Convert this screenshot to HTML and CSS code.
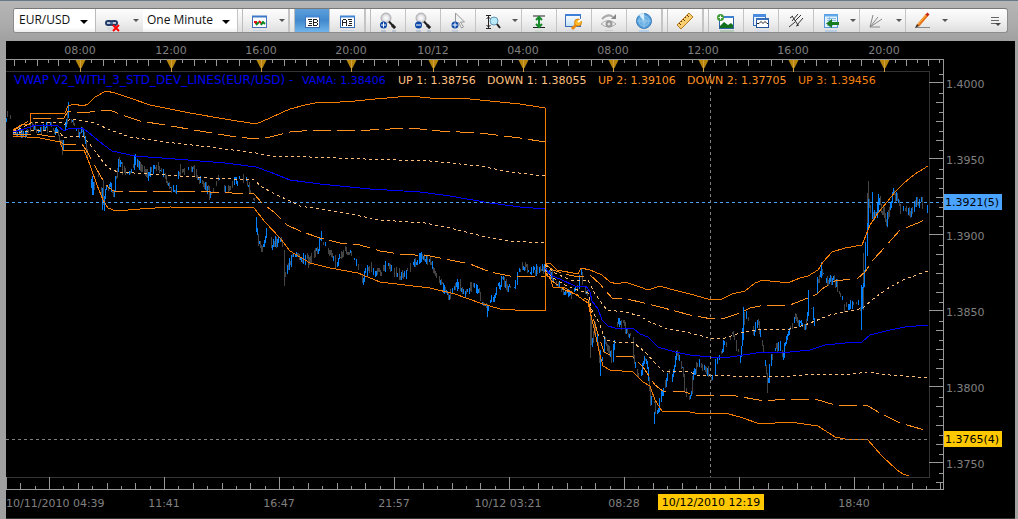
FILE: index.html
```html
<!DOCTYPE html>
<html lang="en">
<head>
<meta charset="utf-8">
<title>EUR/USD chart</title>
<link rel="stylesheet" href="styles.css">
</head>
<body>
<svg class="defs" aria-hidden="true">
  <defs>
    <radialGradient id="lens"><stop offset="0" stop-color="#fff"/><stop offset=".6" stop-color="#e4e4e8"/><stop offset="1" stop-color="#b8b8bc"/></radialGradient>
    <linearGradient id="win" x2="0" y2="1"><stop offset="0" stop-color="#fff"/><stop offset="1" stop-color="#bfe0f8"/></linearGradient>
    <radialGradient id="radar"><stop offset="0" stop-color="#8cc8f0"/><stop offset="1" stop-color="#4a96d4"/></radialGradient>
  </defs>
</svg>
<div class="window">
  <header class="frame-top">
    <div class="tab-strip"></div>
    <div class="toolbar" role="toolbar" aria-label="Chart tools">
      <label class="picker symbol"><select aria-label="Instrument"><option>EUR/USD</option></select></label>
      <button class="tool link" aria-label="Link charts">
        <svg class="icon" viewBox="0 0 24 24"><g fill="none" stroke="#1f3a66" stroke-width="2"><rect x="5" y="12" width="6" height="4" rx="2"/><rect x="10" y="12" width="6" height="4" rx="2"/></g><path d="M7 14h7" stroke="#7fa0cc"/><path d="M6 19h7M7 21h5" stroke="#c8ccd2"/><path d="M12 16l6 6M18 16l-6 6" stroke="#f00" stroke-width="2"/></svg>
        <span class="caret"></span></button>
      <label class="picker period"><select aria-label="Period"><option>One Minute</option></select></label>
      <span class="gap"></span>
      <button class="tool wide" aria-label="Chart type">
        <svg class="icon" viewBox="0 0 24 24"><rect x="5.500" y="7.500" width="14" height="11" fill="#fff" stroke="#4771b8"/><path d="M5 7.500h15" stroke="#3d78c8" stroke-width="2"/><path d="M7 13h2v2" fill="none" stroke="#e01010" stroke-width="2"/><path d="M9 16l3-3" fill="none" stroke="#0a8a20" stroke-width="2"/><path d="M12 12l3 3" fill="none" stroke="#e01010" stroke-width="2"/><path d="M14 16l2-3 2 2" fill="none" stroke="#0a8a20" stroke-width="2"/><path d="M6 21.500h13" stroke="#c9d6e8"/></svg>
        <span class="caret"></span></button>
      <span class="gap"></span>
      <button class="tool active" aria-label="Bid" aria-pressed="true">
        <svg class="icon" viewBox="0 0 24 24"><rect x="5.500" y="7.500" width="14" height="11" fill="#fff" stroke="#3a6eb0"/><path d="M5 7.500h15" stroke="#4286d6" stroke-width="2"/><path d="M8 10.500h4M9 12.500h3M9 14.500h3M8 16.500h4M13.500 10v7M13 10.500h4M13 13.500h4M13 16.500h4M17.500 11v2M17.500 14v2" stroke="#222"/></svg></button>
      <button class="tool" aria-label="Ask">
        <svg class="icon" viewBox="0 0 24 24"><rect x="5.500" y="7.500" width="14" height="11" fill="#fff" stroke="#3a6eb0"/><path d="M5 7.500h15" stroke="#4286d6" stroke-width="2"/><path d="M7.500 11v6M11.500 11v6M8 10.500h3M8 13.500h3M13 10.500h4M14 12.500h3M14 14.500h3M13 16.500h4" stroke="#222"/><path d="M6 21.500h13" stroke="#c9d6e8"/></svg></button>
      <span class="gap"></span>
      <button class="tool" aria-label="Zoom in">
        <svg class="icon" viewBox="0 0 24 24"><circle cx="10" cy="9" r="5" fill="url(#lens)" stroke="#b5b5b8"/><path d="M13 12.500l6 6.500" stroke="#222" stroke-width="2"/><path d="M16 16l3 3" stroke="#222" stroke-width="3"/><circle cx="7.500" cy="16" r="3.500" fill="#0c48a8"/><path d="M5 16h5M7.500 13.500v5" stroke="#fff"/><path d="M5 22h5M16 22h4" stroke="#b9c3d2" stroke-width="2"/></svg></button>
      <button class="tool" aria-label="Zoom out">
        <svg class="icon" viewBox="0 0 24 24"><circle cx="10" cy="9" r="5" fill="url(#lens)" stroke="#b5b5b8"/><path d="M13 12.500l6 6.500" stroke="#222" stroke-width="2"/><path d="M16 16l3 3" stroke="#222" stroke-width="3"/><circle cx="7.500" cy="16" r="3.500" fill="#0c48a8"/><path d="M5 16h5" stroke="#fff"/><path d="M5 22h5M16 22h4" stroke="#b9c3d2" stroke-width="2"/></svg></button>
      <button class="tool" aria-label="Zoom to selection">
        <svg class="icon" viewBox="0 0 24 24"><path d="M9.500 4v12l3-3 3 6 2-1-3-5h4z" fill="#f2f2f2" stroke="#999"/><circle cx="9" cy="16" r="3.500" fill="#0c48a8"/><path d="M6.500 16h5M9 13.500v5" stroke="#fff"/><path d="M6 22h6" stroke="#c3ccd8" stroke-width="2"/></svg></button>
      <button class="tool wide" aria-label="Vertical zoom">
        <svg class="icon" viewBox="0 0 24 24"><path d="M8.500 7v12M6 6.500h5M6 19.500h5M6.500 10l2-2 2 2M6.500 16l2 2 2-2" fill="none" stroke="#222"/><circle cx="14" cy="12" r="4" fill="#b8eafa" stroke="#6298b8"/><path d="M17 15l3 4" stroke="#222" stroke-width="2"/></svg>
        <span class="caret"></span></button>
      <button class="tool" aria-label="Fit height">
        <svg class="icon" viewBox="0 0 24 24"><path d="M6 7h12M6 18.500h12" stroke="#222"/><path d="M12 8v10M9 11l3-3 3 3M9 15l3 3 3-3" fill="none" stroke="#168a28" stroke-width="2"/><path d="M8 22h8" stroke="#c6d2c6"/></svg></button>
      <button class="tool" aria-label="Chart settings">
        <svg class="icon" viewBox="0 0 24 24"><rect x="3.500" y="5.500" width="15" height="12" fill="url(#win)" stroke="#3f6cb4"/><path d="M3 6h16" stroke="#3d80da" stroke-width="2"/><path d="M10 20l5-5" stroke="#e88a10" stroke-width="3"/><circle cx="16" cy="13.500" r="3.500" fill="#ffb828" stroke="#d88410"/><path d="M16 13l4-3" stroke="#fff" stroke-width="2"/><path d="M4 21.500h12" stroke="#d6d9e0"/></svg></button>
      <button class="tool" aria-label="Show or hide">
        <svg class="icon" viewBox="0 0 24 24"><path d="M4 15q7-7 15 0q-7 6-15 0z" fill="#eee" stroke="#aaa"/><circle cx="12" cy="15" r="2.500" fill="#ddd" stroke="#999" stroke-width="2"/><path d="M5 10q6-6 11-2" fill="none" stroke="#aaa" stroke-width="2"/><path d="M19 5v5h-5z" fill="#888"/><path d="M8 21.500h8" stroke="#ccc"/></svg></button>
      <button class="tool" aria-label="Radar">
        <svg class="icon" viewBox="0 0 24 24"><circle cx="12" cy="12" r="7.500" fill="url(#radar)" stroke="#3b80c0"/><g fill="none" stroke="#8cc4ec"><circle cx="12" cy="12" r="5"/><circle cx="12" cy="12" r="2"/><path d="M5 12h14M12 5v14"/></g><path d="M12 12l-5-6a8 8 0 0 1 5-2z" fill="#d8f0ff"/><path d="M7 22h10" stroke="#b8d2ea" stroke-width="2"/></svg></button>
      <span class="gap"></span>
      <button class="tool" aria-label="Ruler">
        <svg class="icon" viewBox="0 0 24 24"><path d="M4 16l12-12 4 4-12 12z" fill="#f9cf70" stroke="#b57a24"/><path d="M6 14l2 2M8 12l1 1M10 10l2 2M12 8l1 1M14 6l2 2" stroke="#6a3c08"/></svg></button>
      <span class="gap"></span>
      <button class="tool" aria-label="Add image">
        <svg class="icon" viewBox="0 0 24 24"><rect x="5.500" y="7.500" width="14" height="12" fill="#fff" stroke="#2f62a0"/><path d="M5 8h15" stroke="#3d80d0" stroke-width="2"/><path d="M6 19v-2l4-4 4 3 3-2 2 2v3z" fill="#13701c"/><circle cx="6.500" cy="8.500" r="3.500" fill="#3f9b36"/><path d="M4.500 8.500h4M6.500 6.500v4" stroke="#fff"/><path d="M6 22h14" stroke="#b9cab9" stroke-width="2"/></svg></button>
      <button class="tool" aria-label="Windows">
        <svg class="icon" viewBox="0 0 24 24"><rect x="4.500" y="5.500" width="12" height="11" fill="#eaf4ff" stroke="#3a6eb8"/><path d="M4 6.500h13" stroke="#4a8ce0" stroke-width="3"/><rect x="7.500" y="9.500" width="12" height="9" fill="#fff" stroke="#24549a"/><path d="M7 10h13" stroke="#386fb8" stroke-width="2"/><path d="M8 14.500h2l2-2 2 2 2-2 2 2h1" fill="none" stroke="#222"/><path d="M7 22h13" stroke="#c9d6e8"/></svg></button>
      <button class="tool" aria-label="Pitchfork">
        <svg class="icon" viewBox="0 0 24 24"><path d="M5 18l6-5M8 7l6 9M8 12l6-7M11 12l6-6M13 16l6-7M6 9l3-2M12 17l3-1" fill="none" stroke="#333"/></svg></button>
      <button class="tool wide" aria-label="Object list">
        <svg class="icon" viewBox="0 0 24 24"><rect x="6.500" y="5.500" width="13" height="13" fill="#e2f3ff" stroke="#5797d8"/><path d="M6 6.500h14" stroke="#62aaf0" stroke-width="2"/><path d="M9 9.500h9M9 11.500h9M9 16.500h6M11.500 8v10" stroke="#8cbce4"/><path d="M21 14.500h-9" stroke="#197b20" stroke-width="3"/><path d="M14 10v9l-6-4.500z" fill="#197b20"/><path d="M7 22h12" stroke="#b8cce2" stroke-width="2"/></svg>
        <span class="caret"></span></button>
      <button class="tool wide" aria-label="Fan lines">
        <svg class="icon" viewBox="0 0 24 24"><path d="M6 18L9 6M6 18l8-10M6 18l12-8M6 18h10" fill="none" stroke="#888"/></svg>
        <span class="caret"></span></button>
      <button class="tool wide last" aria-label="Draw">
        <svg class="icon" viewBox="0 0 24 24"><path d="M5 18.500h15" stroke="#888"/><path d="M8 16.500L17 6" stroke="#e87010" stroke-width="3"/><path d="M8 15.500L17 5" stroke="#ffc050"/><path d="M16.500 6.500l2-2" stroke="#c82818" stroke-width="3"/><path d="M5 19l2-4 2 2z" fill="#443020"/></svg>
        <span class="caret"></span></button>
      <button class="overflow" aria-label="More tools">
        <svg class="icon" viewBox="0 0 24 24"><path d="M8 8.500h8M8 11.500h8M8 14.500h5" stroke="#666"/><path d="M12 14h6l-3 3z" fill="#444"/></svg></button>
    </div>
  </header>
  <main class="chart-frame">
    <svg id="chart" class="chart" viewBox="6 41 1009 478" role="img" aria-label="EUR/USD one minute price chart with VWAP deviation bands"></svg>
  </main>
</div>
<script src="chart.js"></script>
</body>
</html>
```
FILE: styles.css
```css
* { box-sizing: border-box; }

body {
  margin: 0;
  background: #a0a0a0;
  font-family: "Open Sans", "Noto Sans", sans-serif;
}

.defs { position: absolute; width: 0; height: 0; }

.window { display: flex; flex-direction: column; }

.frame-top {
  background: linear-gradient(#b6b6b6, #ababab 60%, #a0a0a0);
  border-top: 1px solid #66788a;
  padding: 0 10px 8px 13px;
}

.tab-strip {
  height: 7px;
}

.toolbar {
  display: flex;
  height: 25px;
  border: 1px solid #8c8c8c;
  border-top-color: #777;
  border-radius: 3px;
  background: linear-gradient(#fdfdfd, #f1f1f1 50%, #dedede);
  overflow: hidden;
}

.picker {
  position: relative;
  display: flex;
  background: linear-gradient(#fff 80%, #eee);
}

.picker::after {
  content: "";
  position: absolute;
  right: 7px;
  top: 11px;
  border: 4px solid transparent;
  border-top-color: #000;
  border-bottom: 0;
  pointer-events: none;
}

.picker select {
  width: 100%;
  appearance: none;
  border: 0;
  background: transparent;
  padding: 0 0 2px 5px;
  font-family: inherit;
  font-size: 12px;
  color: #111;
}

.symbol { width: 82px; border-right: 1px solid #bbb; }
.period { width: 94px; }
.period select { padding-left: 4px; }

.gap {
  flex: none;
  width: 6px;
  border-left: 1px solid #c4c4c4;
  border-right: 1px solid #bdbdbd;
}

.tool,
.overflow {
  display: flex;
  align-items: center;
  justify-content: center;
  flex: none;
  width: 35px;
  padding: 0;
  border: 0;
  border-right: 1px solid #c4c4c4;
  background: transparent;
}

.tool.wide { width: 46px; }
.tool.link { width: 47px; border-right: 0; }
.tool.last { border-right: 0; }
.tool.active { background: linear-gradient(#5c9fdc, #4289ce 50%, #70b4ea); }

.icon {
  flex: none;
  width: 24px;
  height: 24px;
}

.caret {
  margin-left: 8px;
  border: 3px solid transparent;
  border-top-color: #555;
  border-bottom: 0;
}

.overflow { width: 24px; margin-left: auto; border-right: 0; }

.chart-frame {
  padding: 0 3px 0 6px;
}

.chart {
  display: block;
  width: 100%;
  background: #000;
  font-family: "DejaVu Sans", Verdana, sans-serif;
  font-size: 11px;
}

.axis { stroke: #989898; shape-rendering: crispEdges; fill: none; }
.frame { stroke: #343434; shape-rendering: crispEdges; fill: none; }
.marker { fill: #b8860b; }
.marker-stem { stroke: #d0a040; shape-rendering: crispEdges; }
.label { fill: #808080; }
.middle { text-anchor: middle; }
.up { stroke: #0080ff; fill: none; shape-rendering: crispEdges; }
.down { stroke: #444; fill: none; shape-rendering: crispEdges; }
.band { fill: none; shape-rendering: crispEdges; }
.dev3 { stroke: #f57c00; }
.dev2 { stroke: #ff9020; stroke-dasharray: 18 6; }
.dev1 { stroke: #ffbe78; stroke-dasharray: 3 3; }
.vama { stroke: #0000ff; }
.last-price { stroke: #4aa3ff; stroke-dasharray: 3 3; shape-rendering: crispEdges; }
.cursor { stroke: #808080; stroke-dasharray: 3 3; shape-rendering: crispEdges; }
.tag-price { fill: #4aa3ff; }
.tag-cursor { fill: #ffc800; }
.tag-text { fill: #000; }
.legend-vama { fill: #0000f0; }
.legend-name { font-size: 12px; }
.legend-1 { fill: #ffc080; }
.legend-2 { fill: #ff9428; }
.legend-3 { fill: #f58010; }
```
FILE: chart.js
```js
const chart = document.getElementById("chart");

function add(name, attrs, text) {
  const node = document.createElementNS("http://www.w3.org/2000/svg", name);
  for (const key in attrs) node.setAttribute(key, attrs[key]);
  if (text) node.textContent = text;
  chart.appendChild(node);
}

function path(d, cls) { add("path", { d: d, class: cls }); }
function label(x, y, text, cls) { add("text", { x: x, y: y, class: cls }, text); }

/* plot frame */
path("M6 71.5H929.5V477.5H6", "frame");
path("M6 518.5H1015", "frame");

/* price bars: the mid price is interpolated between turning points */
const turns = [
  [13,134],[15,133],[25,131],[33,124],[40,129],[50,126],[58,133],[62,146],[66,118],[68,106],[70,120],[74,127],[78,133],[82,126],
  [85,145],[88,165],[92,190],[96,178],[99,178],[103,205],[106,185],[110,184],[113,194],[118,160],[124,172],[130,175],
  [135,160],[140,168],[146,175],[152,170],[157,165],[162,172],[168,184],[175,190],[180,168],[185,170],[192,167],
  [197,178],[203,183],[209,193],[214,186],[220,176],[226,192],[232,185],[240,175],[247,185],[254,200],[256,232],
  [258,240],[262,248],[266,233],[270,243],[278,241],[282,244],[284,270],[285,278],[288,265],[294,253],[302,258],
  [310,262],[317,248],[321,236],[327,248],[336,265],[345,248],[352,252],[358,270],[362,280],[370,267],[376,275],
  [387,264],[393,272],[405,275],[412,262],[420,258],[430,262],[437,280],[442,287],[448,295],[452,288],[458,283],
  [465,295],[470,286],[478,292],[483,305],[487,308],[490,298],[495,292],[502,280],[507,290],[512,290],[517,277],
  [521,266],[530,270],[538,272],[545,268],[550,275],[553,283],[560,285],[566,293],[571,296],[578,285],[580,272],
  [585,290],[588,300],[590,320],[591,343],[594,325],[597,340],[600,368],[602,355],[604,340],[608,352],[612,362],
  [615,330],[618,320],[623,325],[627,335],[631,330],[634,365],[638,378],[641,370],[645,355],[648,378],[650,400],
  [653,402],[656,415],[660,398],[664,385],[668,375],[671,380],[674,365],[676,350],[679,358],[682,370],[684,390],
  [687,403],[690,395],[694,370],[700,363],[706,370],[712,378],[715,365],[720,350],[726,342],[731,332],[735,345],
  [740,360],[743,318],[748,318],[752,332],[758,322],[762,345],[767,382],[770,364],[775,348],[780,346],[783,355],
  [786,335],[791,325],[796,317],[800,325],[805,328],[808,305],[810,305],[814,322],[817,282],[821,268],[825,277],
  [830,280],[836,285],[841,295],[844,307],[850,306],[857,300],[861,308],[862,290],[864,275],[866,250],[868,202],
  [870,210],[875,218],[878,200],[882,210],[886,222],[890,202],[893,193],[897,200],[901,215],[905,208],[910,215],
  [914,205],[920,200],[924,208],[928,203]
];
let seed = 11;
function random() {
  seed = (seed * 16807) % 2147483647;
  return seed / 2147483647;
}
let up = "";
let down = "";
function bar(x, top, bottom, rising) {
  const d = "M" + (x + 0.5) + " " + Math.round(top) + "V" + Math.round(bottom);
  if (rising) up += d; else down += d;
}
let previous = 134;
let i = 0;
for (let x = 13; x < 928; x++) {
  while (turns[i + 1][0] <= x) i++;
  const a = turns[i];
  const b = turns[i + 1];
  const price = a[1] + (b[1] - a[1]) * (x - a[0]) / (b[0] - a[0]) + (random() - 0.5) * 9;
  if (random() > 0.25) {
    bar(x, Math.min(price, previous) - random() * 3, Math.max(price, previous) + random() * 3,
      random() < 0.15 ? price > previous : price < previous);
  }
  previous = price;
}
/* wide-range bars */
[[6,118,122,1],[7,111,117,0],[10,115,119,0],[62,140,155,0],[68,104,118,1],[92,176,195,1],[102,188,210,1],
 [103,180,205,0],[134,155,170,1],[284,250,286,0],[487,306,317,1],[590,310,358,0],[600,350,376,1],
 [654,412,424,1],[743,307,340,1],[744,312,325,0],[767,374,393,0],[808,290,315,1],[821,262,278,1],[861,285,330,1],
 [863,253,310,0],[865,242,270,1],[867,193,228,0],[868,181,218,0],[872,192,214,1],[878,194,212,1]
].forEach(b => bar(b[0], b[1], b[2], b[3]));
path(down, "down");
path(up, "up");

/* deviation bands, one polyline for each session */
const bands = [
  ["dev3", "13,130 21,125 30,124 31,113 65,113 68,106 74,104 83,106 88,104 95,97 106,91 115,93 130,98 150,105 190,113 225,119 256,124 270,118 283,112 290,109 305,105 320,102 340,102 355,101 375,99 410,96 430,98 460,98 490,101 520,104 545,108 545,310 515,310 500,309 480,303 455,294 430,288 380,282 358,273 330,268 310,263 290,251 281,239 265,222 254,208 170,207 140,209 116,211 108,208 103,200 97,185 90,165 84,150 63,150 60,142 40,138 13,136"],
  ["dev2", "13,131 30,120 33,118 64,118 68,111 85,113 100,110 112,111 125,116 140,121 165,125 200,131 230,136 256,139 270,137 290,132 315,130 370,130 410,128 440,131 480,133 520,138 545,142"],
  ["dev1", "13,132 33,122 60,122 64,125 70,119 85,121 95,123 110,130 130,137 165,142 210,147 256,153 270,156 310,157 365,159 430,161 480,166 510,172 545,176"],
  ["dev1", "13,133 30,131 40,130 60,133 64,138 72,136 84,137 92,147 100,158 108,168 118,172 150,174 210,178 254,180 262,187 275,194 290,201 300,206 350,214 380,220 425,223 450,228 490,238 510,241 545,243"],
  ["dev2", "13,134 35,134 55,137 63,144 82,144 88,153 96,168 104,182 109,188 114,191 160,191 210,192 254,194 262,203 275,213 287,225 300,231 320,238 340,243 360,245 380,251 400,254 430,256 470,264 490,272 510,276 545,276"],
  ["vama", "13,132 31,127 34,125 58,126 64,131 70,128 82,128 88,132 100,142 112,151 135,156 175,159 225,163 256,167 270,172 290,180 320,184 370,189 420,192 450,196 490,203 520,207 545,209"],
  ["dev3", "545,263 550,263 557,270 578,274 581,268 590,270 602,275 610,282 617,284 625,282 640,287 648,290 660,286 670,289 690,294 708,299 720,300 732,294 745,291 755,283 763,280 770,281 780,282 790,282 800,278 808,276 818,270 823,262 832,252 845,248 862,245 870,225 878,213 887,202 895,192 904,183 915,174 928,166"],
  ["dev2", "545,264 553,270 565,274 578,277 590,275 600,284 612,298 622,298 640,302 660,307 690,315 712,319 725,318 740,313 750,308 765,305 778,305 790,305 803,300 817,294 822,289 835,281 858,278 865,272 873,260 885,247 900,230 918,223 928,218"],
  ["dev1", "545,265 555,273 570,280 588,280 595,294 607,310 625,312 640,316 650,322 665,328 690,333 710,338 725,338 740,333 760,329 790,329 805,325 815,321 830,315 850,311 863,308 873,299 890,287 905,279 928,271"],
  ["dev1", "545,270 553,278 565,285 580,291 588,293 592,310 600,325 605,340 615,342 634,343 645,352 655,363 663,371 690,372 697,375 730,376 790,376 820,374 845,375 867,372 890,375 928,378"],
  ["dev2", "545,272 552,281 565,290 580,296 588,300 593,318 600,340 604,352 612,356 633,357 643,367 655,385 663,391 685,392 695,395 730,395 765,401 775,400 815,399 835,405 868,406 880,413 900,423 928,431"],
  ["dev3", "545,275 550,277 553,287 565,288 575,294 588,303 594,328 600,355 603,366 610,370 633,372 643,382 650,386 655,400 662,411 690,412 700,414 725,413 740,417 760,424 775,423 790,422 818,426 835,437 845,439 867,439 882,456 897,470 903,474 909,476"],
  ["vama", "545,268 552,276 560,279 575,286 586,286 590,292 592,301 598,309 602,320 608,326 615,328 634,329 640,334 648,337 658,347 675,352 690,355 710,357 730,357 750,354 763,352 790,352 810,350 825,345 845,343 862,342 870,335 890,330 905,327 928,325"]
];
bands.forEach(b => add("polyline", { points: b[1], class: "band " + b[0] }));

/* last price and cross-hair */
path("M6 202.5H943", "last-price");
path("M6 439.5H929", "cursor");
path("M710.5 74V477", "cursor");

/* top time axis */
path("M6 59.5H943.5V489.5H6", "axis");
const hours = [[80,"08:00"],[171,"12:00"],[261,"16:00"],[351,"20:00"],[433,"10/12"],[523,"04:00"],[613,"08:00"],[703,"12:00"],[793,"16:00"],[884,"20:00"]];
let ticks = "";
[[14,6],[25,3],[37,6],[48,3],[58,6],[69,3],[895,3],[906,6],[917,3],[928,6],[939,3]].forEach(t => ticks += "M" + (t[0] + 0.5) + " 60v" + t[1]);
hours.forEach((h, n) => {
  const x = h[0] + 0.5;
  if (n < hours.length - 1) {
    const steps = h[0] === 351 ? 7 : 8;
    const step = (hours[n + 1][0] - h[0]) / steps;
    for (let k = 1; k < steps; k++) ticks += "M" + (Math.round(h[0] + k * step) + 0.5) + " 60v" + (k % 2 ? 3 : 6);
  }
  path("M" + (x - 5) + " 60h10l-4 8h-2z", "marker");
  path("M" + x + " 60v12", "marker-stem");
  label(h[0], 54, h[1], "label middle");
});

/* price axis */
for (let k = -1; k < 43; k++) {
  const y = Math.round(83 + k * 9.5);
  if (k % 8 && y < 488) ticks += "M943 " + (y + 0.5) + "h" + (k % 2 ? -4 : -7);
}
["1.4000", "1.3950", "1.3900", "1.3850", "1.3800", "1.3750"].forEach((price, n) => {
  const y = 83 + n * 76;
  ticks += "M929 " + (y - 0.5) + "h14";
  label(946, y + 5, price, "label");
});

/* bottom time axis */
for (let k = -2; k < 63; k++) {
  const x = Math.round(49 + k * 14.375) + 0.5;
  ticks += "M" + x + " 489v" + (k % 8 === 0 ? -12 : k % 2 ? -3 : -6);
}
ticks += "M6.5 489v-12";
path(ticks, "axis");
label(6, 507, "10/11/2010 04:39", "label");
[[164,"11:41"],[279,"16:47"],[394,"21:57"],[508,"10/12 03:21"],[624,"08:28"],[854,"18:40"]].forEach(t => label(t[0], 507, t[1], "label middle"));

/* value tags */
add("rect", { x: 944, y: 194, width: 58, height: 16, class: "tag-price" });
label(945, 206, "1.3921(5)", "tag-text");
add("rect", { x: 944, y: 431, width: 58, height: 16, class: "tag-cursor" });
label(945, 443, "1.3765(4)", "tag-text");
add("rect", { x: 658, y: 494, width: 106, height: 16, class: "tag-cursor" });
label(711, 506, "10/12/2010 12:19", "tag-text middle");

/* legend */
label(14, 84, "VWAP V2_WITH_3_STD_DEV_LINES(EUR/USD) -", "legend-vama legend-name");
label(302, 84, "VAMA: 1.38406", "legend-vama");
label(398, 84, "UP 1: 1.38756", "legend-1");
label(487, 84, "DOWN 1: 1.38055", "legend-1");
label(598, 84, "UP 2: 1.39106", "legend-2");
label(687, 84, "DOWN 2: 1.37705", "legend-2");
label(798, 84, "UP 3: 1.39456", "legend-3");
```
